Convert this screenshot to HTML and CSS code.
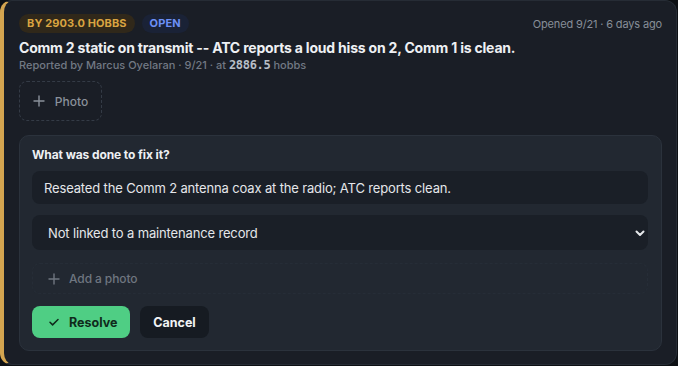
FILE: index.html
```html
<!DOCTYPE html>
<html>
<head>
<meta charset="utf-8">
<link rel="stylesheet" href="styles.css">
</head>
<body>
<div class="card">
  <div class="top-row">
    <div class="badges">
      <span class="badge badge-due">BY 2903.0 HOBBS</span>
      <span class="badge badge-open">OPEN</span>
    </div>
    <div class="opened">Opened 9/21 · 6 days ago</div>
  </div>
  <h1 class="title">Comm 2 static on transmit -- ATC reports a loud hiss on 2, Comm 1 is clean.</h1>
  <div class="meta">Reported by Marcus Oyelaran · 9/21 · at <span class="hobbs">2886.5</span> hobbs</div>
  <button class="photo-btn"><svg width="12" height="12" viewBox="0 0 12 12"><path d="M6 1v10M1 6h10" stroke="currentColor" stroke-width="1.4" stroke-linecap="round"/></svg>Photo</button>
  <div class="panel">
    <div class="label">What was done to fix it?</div>
    <div class="input">Reseated the Comm 2 antenna coax at the radio; ATC reports clean.</div>
    <div class="select">
      <span>Not linked to a maintenance record</span>
      <svg width="12" height="12" viewBox="0 0 12 12"><path d="M2.5 4.5L6 8l3.5-3.5" fill="none" stroke="#e6e8eb" stroke-width="2" stroke-linecap="round" stroke-linejoin="round"/></svg>
    </div>
    <div class="add-photo"><svg width="12" height="12" viewBox="0 0 12 12"><path d="M6 1v10M1 6h10" stroke="currentColor" stroke-width="1.4" stroke-linecap="round"/></svg>Add a photo</div>
    <div class="actions">
      <button class="btn btn-resolve"><svg width="12" height="12" viewBox="0 0 12 12"><path d="M2 6.3l2.6 2.6L10 3.5" fill="none" stroke="currentColor" stroke-width="1.5" stroke-linecap="round" stroke-linejoin="round"/></svg>Resolve</button>
      <button class="btn btn-cancel">Cancel</button>
    </div>
  </div>
</div>
</body>
</html>
```

FILE: styles.css
```css
* { box-sizing: border-box; }
html, body {
  margin: 0;
  padding: 0;
  background: #0d1014;
  font-family: Inter, "Noto Sans", sans-serif;
}
.card {
  width: 677px;
  height: 365px;
  margin: 0;
  background: #1a1e26;
  border: 1px solid #262c35;
  border-left: 4px solid #d4a550;
  border-radius: 12px;
  padding: 13px 14px 0 15px;
  display: flex;
  flex-direction: column;
}
.top-row {
  display: flex;
  justify-content: space-between;
  align-items: center;
  height: 19px;
}
.badges { display: flex; gap: 7px; }
.badge {
  font-size: 11px;
  font-weight: 700;
  letter-spacing: 0.1px;
  line-height: 19px;
  padding: 0 8px;
  border-radius: 10px;
}
.badge-due { color: #d9a441; background: #30281a; }
.badge-open { color: #6c8ff5; background: #1a2236; }
.opened {
  font-size: 11px;
  letter-spacing: -0.15px;
  color: #878e98;
  padding-right: 0;
}
.title {
  margin: 5px 0 0;
  font-size: 14px;
  font-weight: 700;
  letter-spacing: -0.2px;
  line-height: 20px;
  color: #eef0f3;
}
.meta {
  font-size: 11px;
  font-weight: 500;
  color: #727984;
  line-height: 15px;
  margin-top: 0;
  letter-spacing: 0;
}
.hobbs {
  font-family: "DejaVu Sans Mono", monospace;
  font-weight: 700;
  font-size: 12px;
  color: #b8bec7;
  letter-spacing: -0.3px;
}
.photo-btn {
  margin-top: 8px;
  width: 83px;
  height: 40px;
  background: transparent;
  border: 1px dashed #343b46;
  border-radius: 8px;
  color: #8a919b;
  font-family: inherit;
  font-size: 12px;
  font-weight: 500;
  display: flex;
  align-items: center;
  justify-content: center;
  gap: 10px;
  padding: 0;
}
.panel {
  margin-top: 14px;
  background: #222831;
  border: 1px solid #2b323c;
  border-radius: 10px;
  padding: 11px 13px 12px 12px;
  display: flex;
  flex-direction: column;
}
.label {
  font-size: 12px;
  font-weight: 700;
  color: #eef0f3;
  line-height: 16px;
  letter-spacing: -0.1px;
}
.input {
  margin-top: 8px;
  height: 33px;
  background: #1a1f27;
  border-radius: 8px;
  padding: 0 12px;
  display: flex;
  align-items: center;
  font-size: 13px;
  letter-spacing: -0.15px;
  color: #e4e6ea;
}
.select {
  margin-top: 11px;
  height: 35px;
  background: #1a1f27;
  border-radius: 8px;
  padding: 0 2px 0 16px;
  display: flex;
  align-items: center;
  justify-content: space-between;
  font-size: 13px;
  letter-spacing: -0.15px;
  color: #e4e6ea;
}
.add-photo {
  margin-top: 13px;
  height: 31px;
  border: 1px dashed #262d37;
  border-radius: 8px;
  padding-left: 15px;
  display: flex;
  align-items: center;
  gap: 9px;
  font-size: 12px;
  font-weight: 500;
  letter-spacing: -0.1px;
  color: #6f7680;
}
.actions {
  margin-top: 12px;
  display: flex;
  gap: 10px;
}
.btn {
  height: 32px;
  border: none;
  border-radius: 8px;
  font-family: inherit;
  font-size: 12.5px;
  font-weight: 700;
  display: flex;
  align-items: center;
  padding: 0;
}
.btn-resolve {
  width: 98px;
  background: #4fce84;
  color: #0f2a1b;
  padding-left: 16px;
  gap: 9px;
}
.btn-cancel {
  width: 69px;
  background: #161b22;
  color: #f1f3f5;
  justify-content: center;
}
```
